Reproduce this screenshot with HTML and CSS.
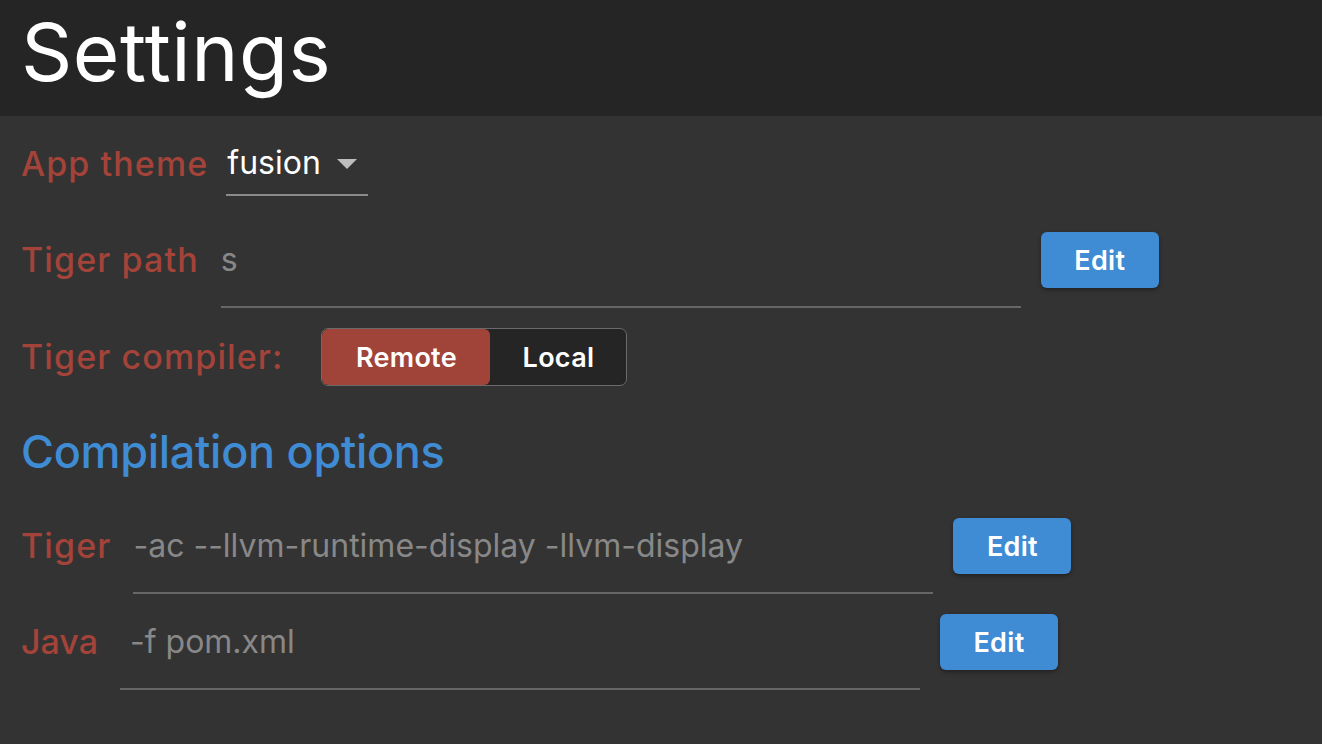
FILE: index.html
```html
<!DOCTYPE html>
<html>
<head>
<meta charset="utf-8">
<title>Settings</title>
<link rel="stylesheet" href="styles.css">
</head>
<body>
<header class="topbar">
  <h1 class="title">Settings</h1>
</header>
<main class="content">
  <div class="row row-theme">
    <span class="label">App theme</span>
    <div class="select">
      <span class="select-value">fusion</span>
      <svg class="caret" width="20" height="10" viewBox="0 0 20 10"><path d="M0 0 H20 L10 10 Z" fill="#bdbdbd"/></svg>
    </div>
  </div>

  <div class="row row-path">
    <span class="label">Tiger path</span>
    <div class="field"><span class="field-text">s</span></div>
    <button class="btn">Edit</button>
  </div>

  <div class="row row-compiler">
    <span class="label">Tiger compiler:</span>
    <div class="segmented">
      <span class="seg seg-active">Remote</span>
      <span class="seg">Local</span>
    </div>
  </div>

  <h2 class="section">Compilation options</h2>

  <div class="row row-opt">
    <span class="label">Tiger</span>
    <div class="field"><span class="field-text">-ac --llvm-runtime-display -llvm-display</span></div>
    <button class="btn">Edit</button>
  </div>

  <div class="row row-opt">
    <span class="label label-tight">Java</span>
    <div class="field"><span class="field-text field-text-indent">-f pom.xml</span></div>
    <button class="btn">Edit</button>
  </div>
</main>
</body>
</html>
```

FILE: styles.css
```css
* { box-sizing: border-box; }

html, body {
  margin: 0;
  padding: 0;
  background: #333333;
  height: 100%;
  font-family: Inter, "Noto Sans", "Liberation Sans", sans-serif;
}

.topbar {
  background: #252525;
  height: 116px;
  padding: 0 21px;
  display: flex;
  align-items: center;
}

.title {
  margin: 0;
  color: #ffffff;
  font-weight: 400;
  font-size: 80px;
  line-height: 1;
  letter-spacing: 0.5px;
  position: relative;
  top: -6px;
}

.content {
  padding: 20px 22px 0 21px;
  display: flex;
  flex-direction: column;
}

.row {
  display: flex;
  align-items: flex-start;
}

.label {
  color: #a34339;
  font-size: 34px;
  line-height: 56px;
  font-weight: 500;
  letter-spacing: 1.1px;
  white-space: nowrap;
}

.label-tight { letter-spacing: 0; }

.row-theme .label { margin-right: 18px; }

.select {
  width: 142px;
  height: 60px;
  border-bottom: 2px solid #8a8a8a;
  display: flex;
  align-items: center;
  padding-left: 1px;
  padding-bottom: 4px;
}

.select-value {
  color: #ffffff;
  font-size: 32px;
  line-height: 56px;
}

.caret {
  margin-left: 16px;
  margin-top: 2px;
}

.row-path { margin-top: 36px; }

.field {
  width: 800px;
  height: 76px;
  margin-left: 22px;
  border-bottom: 2px solid #666666;
}

.field-text {
  display: block;
  color: #888888;
  font-size: 32px;
  line-height: 56px;
  white-space: nowrap;
}

.field-text-indent { padding-left: 10px; }

.btn {
  margin-left: 20px;
  width: 118px;
  height: 56px;
  border: none;
  border-radius: 6px;
  background: #3f8bd4;
  color: #ffffff;
  font-family: inherit;
  font-size: 27px;
  font-weight: 600;
  letter-spacing: 0.3px;
  box-shadow: 0 2px 4px rgba(0,0,0,0.35);
  padding: 0;
}

.row-compiler { margin-top: 20px; }
.row-compiler .label { line-height: 58px; margin-right: 38px; }

.segmented {
  display: flex;
  height: 58px;
  border: 1px solid #6a6a6a;
  border-radius: 7px;
  background: #252525;
  overflow: hidden;
}

.seg {
  display: flex;
  align-items: center;
  justify-content: center;
  color: #ffffff;
  font-size: 27px;
  font-weight: 600;
  letter-spacing: 0.3px;
  width: 136px;
}

.seg-active {
  background: #a0443a;
  width: 168px;
  border-radius: 6px;
}

.section {
  margin: 36px 0 0 0;
  color: #3f8bd4;
  font-size: 45px;
  font-weight: 500;
  line-height: 60px;
  letter-spacing: -0.3px;
}

.row-opt { margin-top: 20px; }
.section + .row-opt { margin-top: 36px; }
```
